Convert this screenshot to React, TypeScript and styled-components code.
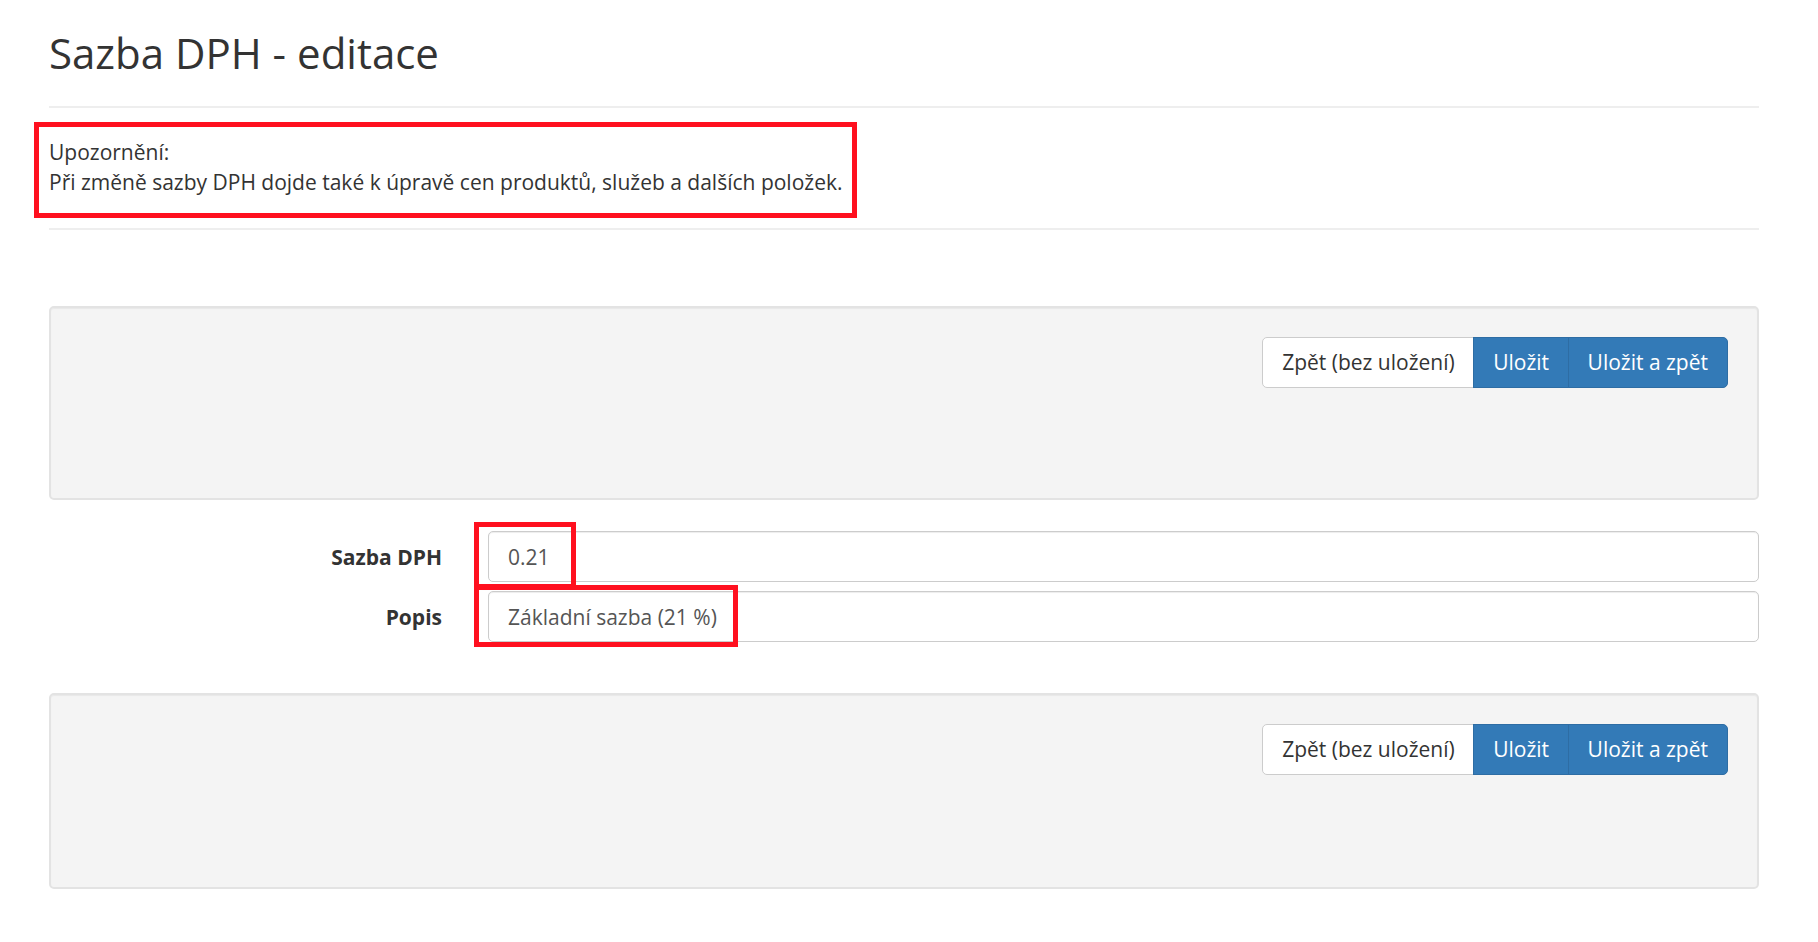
import React from 'react';
import styled, { createGlobalStyle } from 'styled-components';

const Global = createGlobalStyle`
  html, body { margin: 0; padding: 0; background: #fff; }
  body {
    font-family: "Open Sans", "Noto Sans", sans-serif;
    font-size: 21px;
    line-height: 30px;
    color: #333;
  }
  * { box-sizing: border-box; }
`;

const Page = styled.div`
  padding: 30px 59px 0 49px;
`;

const Title = styled.h1`
  margin: 0 0 30px;
  font-size: 42px;
  font-weight: 400;
  line-height: 1.1;
  color: #333;
`;

const Rule = styled.hr<{ $after: number }>`
  margin: 0 0 ${(p) => p.$after}px;
  border: 0;
  border-top: 2px solid #eee;
  height: 0;
`;

const Notice = styled.div`
  position: relative;
  margin-bottom: 31px;
`;

const Highlight = styled.span<{ $top: number; $left: number; $w: number; $h: number }>`
  position: absolute;
  top: ${(p) => p.$top}px;
  left: ${(p) => p.$left}px;
  width: ${(p) => p.$w}px;
  height: ${(p) => p.$h}px;
  border: 5px solid #ff101f;
  pointer-events: none;
  z-index: 2;
`;

const Panel = styled.div<{ $minHeight: number }>`
  display: flex;
  justify-content: flex-end;
  align-items: flex-start;
  min-height: ${(p) => p.$minHeight}px;
  padding: 29px 29px 30px;
  background: #f4f4f4;
  border: 2px solid #e3e3e3;
  border-radius: 5px;
  box-shadow: inset 0 1px 1px rgba(0, 0, 0, 0.05);
`;

const ButtonGroup = styled.div`
  display: flex;
`;

const Button = styled.button<{ $primary?: boolean }>`
  height: 51px;
  padding: 0 19px;
  font-family: inherit;
  font-size: 21px;
  line-height: 1;
  cursor: pointer;
  background: ${(p) => (p.$primary ? '#337ab7' : '#fff')};
  color: ${(p) => (p.$primary ? '#fff' : '#333')};
  border: 1.5px solid ${(p) => (p.$primary ? '#2e6da4' : '#ccc')};
  border-radius: 0;
  margin-left: -1.5px;
  &:first-child {
    margin-left: 0;
    border-radius: 5px 0 0 5px;
  }
  &:last-child {
    border-radius: 0 5px 5px 0;
  }
`;

const Form = styled.div`
  display: grid;
  grid-template-columns: 393px 1fr;
  column-gap: 46px;
  row-gap: 9px;
  align-items: center;
  margin: 31px 0 51px;
`;

const Label = styled.label`
  text-align: right;
  font-weight: 700;
`;

const Field = styled.div`
  position: relative;
`;

const Input = styled.input`
  display: block;
  width: 100%;
  height: 51px;
  padding: 0 19px;
  font-family: inherit;
  font-size: 21px;
  color: #555;
  background: #fff;
  border: 1.5px solid #ccc;
  border-radius: 5px;
  box-shadow: inset 0 1px 1px rgba(0, 0, 0, 0.075);
  outline: none;
`;

function Actions({ minHeight }: { minHeight: number }) {
  return (
    <Panel $minHeight={minHeight}>
      <ButtonGroup>
        <Button type="button">Zpět (bez uložení)</Button>
        <Button type="button" $primary>Uložit</Button>
        <Button type="button" $primary>Uložit a zpět</Button>
      </ButtonGroup>
    </Panel>
  );
}

export default function App() {
  return (
    <>
      <Global />
      <Page>
        <Title>Sazba DPH - editace</Title>
        <Rule $after={29} />
        <Notice>
          Upozornění:
          <br />
          Při změně sazby DPH dojde také k úpravě cen produktů, služeb a dalších položek.
          <Highlight $top={-15} $left={-15} $w={823} $h={96} />
        </Notice>
        <Rule $after={76} />
        <Actions minHeight={194} />
        <Form>
          <Label htmlFor="rate">Sazba DPH</Label>
          <Field>
            <Input id="rate" defaultValue="0.21" />
            <Highlight $top={-9} $left={-14} $w={102} $h={67} />
          </Field>
          <Label htmlFor="desc">Popis</Label>
          <Field>
            <Input id="desc" defaultValue="Základní sazba (21 %)" />
            <Highlight $top={-6} $left={-14} $w={264} $h={62} />
          </Field>
        </Form>
        <Actions minHeight={196} />
      </Page>
    </>
  );
}
